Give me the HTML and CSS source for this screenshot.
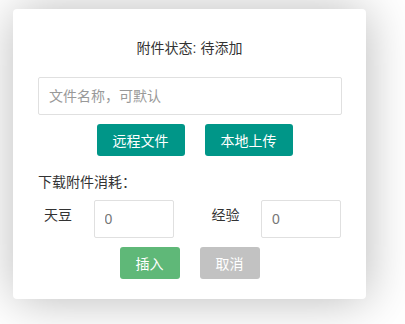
FILE: index.html
```html
<!DOCTYPE html>
<html lang="zh-CN">
<head>
    <meta http-equiv="Content-Type" content="text/html; charset=UTF-8">
    <meta name="viewport" content="width=device-width, initial-scale=1.0">
    <title>附件</title>
    <link rel="stylesheet" href="styles.css">
</head>
<body>
    <div class="layer">
        <div class="status">附件状态: 待添加</div>
        <input class="text-input name-input" type="text" placeholder="文件名称，可默认">
        <div class="btn-row btn-row-top">
            <button class="btn btn-teal">远程文件</button>
            <button class="btn btn-teal">本地上传</button>
        </div>
        <div class="cost-title">下载附件消耗：</div>
        <div class="cost-row">
            <span class="cost-label">天豆</span>
            <input class="text-input cost-input" type="text" value="0">
            <span class="cost-label cost-label-right">经验</span>
            <input class="text-input cost-input" type="text" value="0">
        </div>
        <div class="btn-row">
            <button class="btn btn-small btn-green">插入</button>
            <button class="btn btn-small btn-gray">取消</button>
        </div>
    </div>
</body>
</html>
```

FILE: styles.css
```css
html,
body {
    height: 100%;
}

body {
    margin: 0;
    padding: 9px 0 0 13px;
    box-sizing: border-box;
    background-color: #ffffff;
    font-family: "Liberation Sans", "Noto Sans CJK SC", sans-serif;
    font-size: 14px;
    color: #333333;
    overflow: hidden;
}

.layer {
    box-sizing: border-box;
    width: 353px;
    height: 290px;
    padding: 29px 25px 20px 25px;
    background-color: #ffffff;
    border-radius: 4px;
    box-shadow: 1px 1px 50px rgba(0, 0, 0, 0.28);
}

.status {
    line-height: 20px;
    text-align: center;
}

.text-input {
    box-sizing: border-box;
    display: block;
    height: 38px;
    padding: 0 10px;
    border: 1px solid #e0e0e0;
    border-radius: 2px;
    background-color: #ffffff;
    font-family: inherit;
    font-size: 14px;
    color: #777777;
    outline: none;
}

.text-input::placeholder {
    color: #999999;
}

.name-input {
    width: 304px;
    margin-top: 19px;
}

.btn-row {
    display: flex;
    justify-content: center;
    gap: 20px;
    margin-top: 9px;
}

.btn-row-top {
    padding-left: 10px;
}

.btn {
    height: 32px;
    padding: 0 16px;
    border: none;
    border-radius: 3px;
    font-family: inherit;
    font-size: 14px;
    color: #ffffff;
    cursor: pointer;
}

.btn-small {
    width: 60px;
    padding: 0;
}

.btn-teal {
    width: 88px;
    background-color: #009688;
}

.btn-green {
    background-color: #5fb878;
}

.btn-gray {
    background-color: #c2c2c2;
}

.cost-title {
    margin-top: 16px;
    line-height: 20px;
}

.cost-row {
    display: flex;
    align-items: flex-start;
    margin-top: 8px;
}

.cost-label {
    width: 29px;
    margin: 5px 21px 0 6px;
    line-height: 20px;
    white-space: nowrap;
}

.cost-label-right {
    margin-left: 38px;
}

.cost-input {
    width: 80px;
}
```
